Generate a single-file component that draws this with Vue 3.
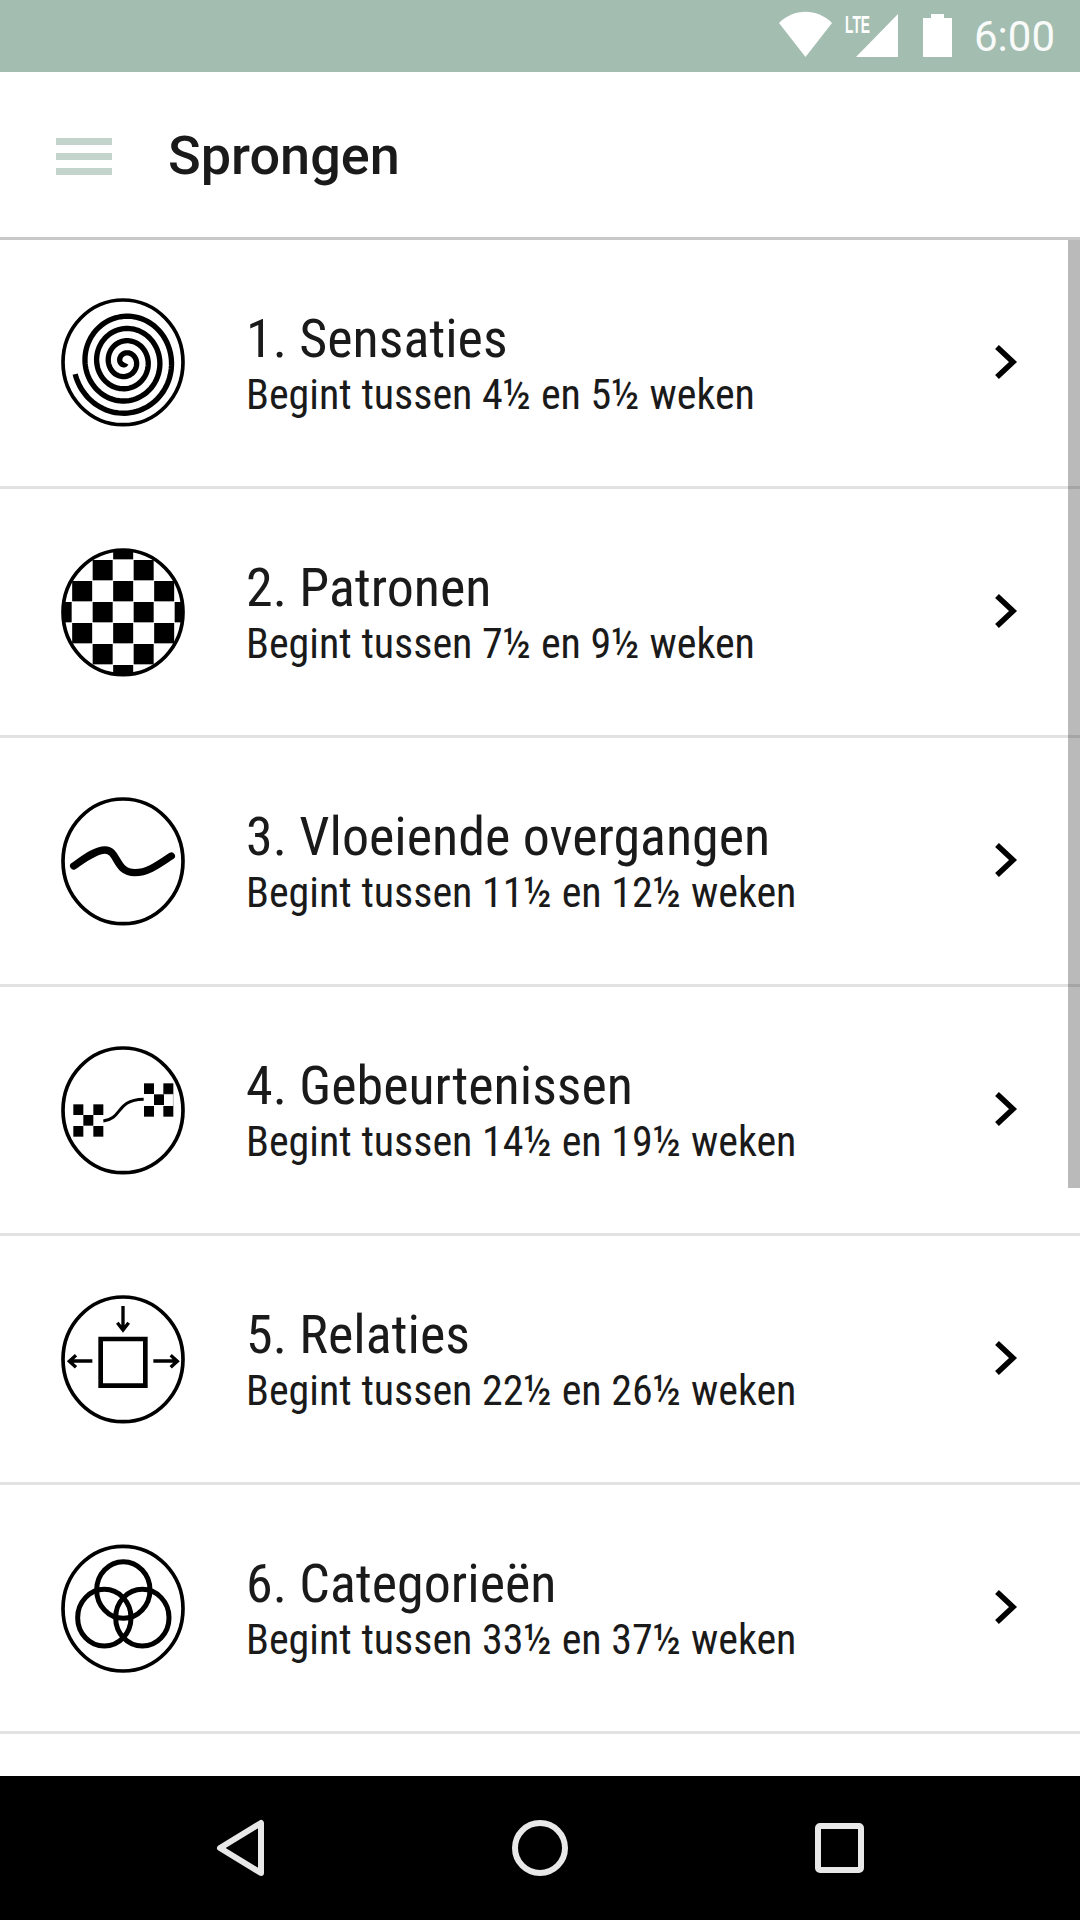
<template>
  <div class="screen">
    <div class="status-bar">
      <svg class="status-icons" width="180" height="72" viewBox="0 0 180 72">
        <path d="M6 23 C21 8 44 8 59 23 L32.500 57 Z" fill="#fff" />
        <text class="lte" x="72" y="33" textLength="25" lengthAdjust="spacingAndGlyphs">LTE</text>
        <path d="M125 14 V57 H83 Z" fill="#fff" />
        <path d="M158 14 H171 V18 H179 V57 H150 V18 H158 Z" fill="#fff" />
      </svg>
      <span class="clock">6:00</span>
    </div>

    <header class="toolbar">
      <div class="menu-icon"><i></i><i></i><i></i></div>
      <h1 class="toolbar-title">Sprongen</h1>
    </header>

    <div class="list-wrap">
      <div class="list">
        <div class="row" v-for="leap in leaps" :key="leap.n">
          <svg class="leap-icon" width="160" height="160" :viewBox="`0 ${leap.top} 480 480`">
            <template v-if="leap.n === 1">
              <ellipse class="ring" cx="249" cy="247" rx="180" ry="187" />
              <path :d="spiral" fill="none" stroke="#000" stroke-width="16" />
            </template>
            <template v-if="leap.n === 2">
              <clipPath id="board">
                <ellipse cx="249" cy="247" rx="180" ry="187" />
              </clipPath>
              <g clip-path="url(#board)">
                <rect v-for="c in boardCells" :key="c.id" :x="c.x" :y="c.y" width="60" height="61" />
              </g>
              <ellipse class="ring" cx="249" cy="247" rx="180" ry="187" />
            </template>
            <template v-if="leap.n === 3">
              <ellipse class="ring" cx="249" cy="244" rx="180" ry="187" />
              <path d="M101 258 C130 238 165 210 195 210 C235 210 225 278 285 278 C325 278 360 250 394 228" fill="none" stroke="#000" stroke-width="22" stroke-linecap="round" />
            </template>
            <template v-if="leap.n === 4">
              <ellipse class="ring" cx="249" cy="241" rx="180" ry="187" />
              <rect v-for="s in miniCells" :key="s[0] + '-' + s[1]" :x="s[0]" :y="s[1]" width="30" height="32" />
              <path d="M190 273 C250 265 225 210 311 208" fill="none" stroke="#000" stroke-width="9" />
              <path d="M372 193 H400 V228" fill="none" stroke="#999" stroke-width="2" />
            </template>
            <template v-if="leap.n === 5">
              <ellipse class="ring" cx="249" cy="238" rx="180" ry="187" />
              <path d="M182 177 H316 V317 H182 Z" class="frame" />
              <path d="M249 78 V150 M232 128 L249 150 L266 128" class="arrow" />
              <path d="M157 243 H90 M108 226 L88 244 L108 262" class="arrow" />
              <path d="M340 243 H410 M392 226 L412 244 L392 262" class="arrow" />
            </template>
            <template v-if="leap.n === 6">
              <ellipse class="ring" cx="249" cy="236" rx="180" ry="187" />
              <ellipse class="loop" cx="250" cy="180" rx="80" ry="85" />
              <ellipse class="loop" cx="193" cy="263" rx="80" ry="85" />
              <ellipse class="loop" cx="307" cy="263" rx="80" ry="85" />
            </template>
          </svg>
          <div class="row-text">
            <div class="row-title">{{ leap.n }}. {{ leap.title }}</div>
            <div class="row-sub">Begint tussen {{ leap.from }} en {{ leap.to }} weken</div>
          </div>
          <svg class="chevron" width="30" height="44" viewBox="0 0 30 44">
            <path d="M6 6 L22 21 L6 36" fill="none" stroke="#000" stroke-width="5.500" />
          </svg>
        </div>
      </div>
      <div class="scrollbar"></div>
    </div>

    <nav class="nav-bar">
      <svg width="1080" height="144" viewBox="0 0 1080 144">
        <path d="M261 47 V97 L220 72 Z" class="nav-shape" stroke-linejoin="round" />
        <circle cx="540" cy="72" r="25" class="nav-shape" />
        <rect x="818" y="50" width="43" height="44" rx="2" class="nav-shape" />
      </svg>
    </nav>
  </div>
</template>

<script setup>
const leaps = [
  { n: 1, title: 'Sensaties', from: '4½', to: '5½', top: 9 },
  { n: 2, title: 'Patronen', from: '7½', to: '9½', top: 6 },
  { n: 3, title: 'Vloeiende overgangen', from: '11½', to: '12½', top: 3 },
  { n: 4, title: 'Gebeurtenissen', from: '14½', to: '19½', top: 0 },
  { n: 5, title: 'Relaties', from: '22½', to: '26½', top: -3 },
  { n: 6, title: 'Categorieën', from: '33½', to: '37½', top: -6 }
]

// archimedean spiral, measured off the reference
const buildSpiral = () => {
  const pts = []
  for (let t = 0.15; t <= 4.425; t += 0.01) {
    const r = 35 * t
    const a = (t - 0.457) * 2 * Math.PI
    const x = 256 - r * Math.cos(a)
    const y = 245 - r * Math.sin(a) * 1.05
    pts.push(`${x.toFixed(1)} ${y.toFixed(1)}`)
  }
  return 'M' + pts.join(' L')
}
const spiral = buildSpiral()

const boardCells = []
for (let row = 0; row < 8; row++) {
  for (let col = 0; col < 8; col++) {
    if ((row + col) % 2 === 1) {
      boardCells.push({ id: `${row}-${col}`, x: 35 + col * 61.500, y: 27 + row * 63 })
    }
  }
}

const miniCells = [
  [100, 223], [160, 223], [130, 255], [100, 288], [160, 288],
  [312, 160], [370, 160], [342, 193], [312, 228], [370, 228]
]
</script>

<style>
html, body {
  margin: 0;
  background: #fff;
}
</style>

<style scoped>
.screen {
  width: 1080px;
  height: 1920px;
  display: flex;
  flex-direction: column;
  overflow: hidden;
  background: #fff;
  font-family: Roboto, "Liberation Sans", sans-serif;
}

.status-bar {
  height: 72px;
  flex: none;
  background: #a4bdb1;
  display: flex;
  justify-content: flex-end;
  align-items: center;
  padding-right: 25px;
}

.status-icons {
  margin-right: 21px;
}

.lte {
  font-family: "Liberation Sans", sans-serif;
  font-size: 23px;
  font-weight: 700;
  fill: #fff;
}

.clock {
  color: #f8fbf9;
  font-size: 42px;
}

.toolbar {
  height: 165px;
  flex: none;
  display: flex;
  align-items: center;
  border-bottom: 3px solid #c8c8c8;
  padding-left: 56px;
}

.menu-icon {
  width: 56px;
  display: flex;
  flex-direction: column;
  gap: 8.500px;
  margin-top: 4px;
  margin-right: 56px;
}

.menu-icon i {
  display: block;
  height: 6.500px;
  background: #c3d4cc;
}

.toolbar-title {
  margin: 2px 0 0;
  font-size: 54px;
  font-weight: 500;
  color: #1a1a1a;
}

.list-wrap {
  flex: 1;
  position: relative;
  overflow: hidden;
}

.row {
  height: 246px;
  border-bottom: 3px solid #e2e2e2;
  display: flex;
  align-items: center;
  padding-left: 40px;
  padding-right: 59px;
}

.leap-icon {
  flex: none;
  margin-right: 46px;
}

.leap-icon rect {
  fill: #000;
}

.ring {
  fill: none;
  stroke: #000;
  stroke-width: 11;
}

.frame {
  fill: none;
  stroke: #000;
  stroke-width: 14;
}

.loop {
  fill: none;
  stroke: #000;
  stroke-width: 15;
}

.arrow {
  fill: none;
  stroke: #000;
  stroke-width: 10;
}

.row-text {
  flex: 1;
  padding-top: 3px;
  color: #1a1a1a;
  font-stretch: 75%;
}

.row-title {
  font-size: 54px;
  line-height: 60px;
}

.row-sub {
  margin-top: 1px;
  font-size: 42px;
  line-height: 50px;
}

.chevron {
  flex: none;
}

.scrollbar {
  position: absolute;
  top: 0;
  right: 0;
  width: 12px;
  height: 948px;
  background: rgba(0, 0, 0, 0.27);
}

.nav-bar {
  height: 144px;
  flex: none;
  background: #000;
}

.nav-bar svg {
  display: block;
}

.nav-shape {
  fill: none;
  stroke: #e8e8e8;
  stroke-width: 6;
}
</style>
